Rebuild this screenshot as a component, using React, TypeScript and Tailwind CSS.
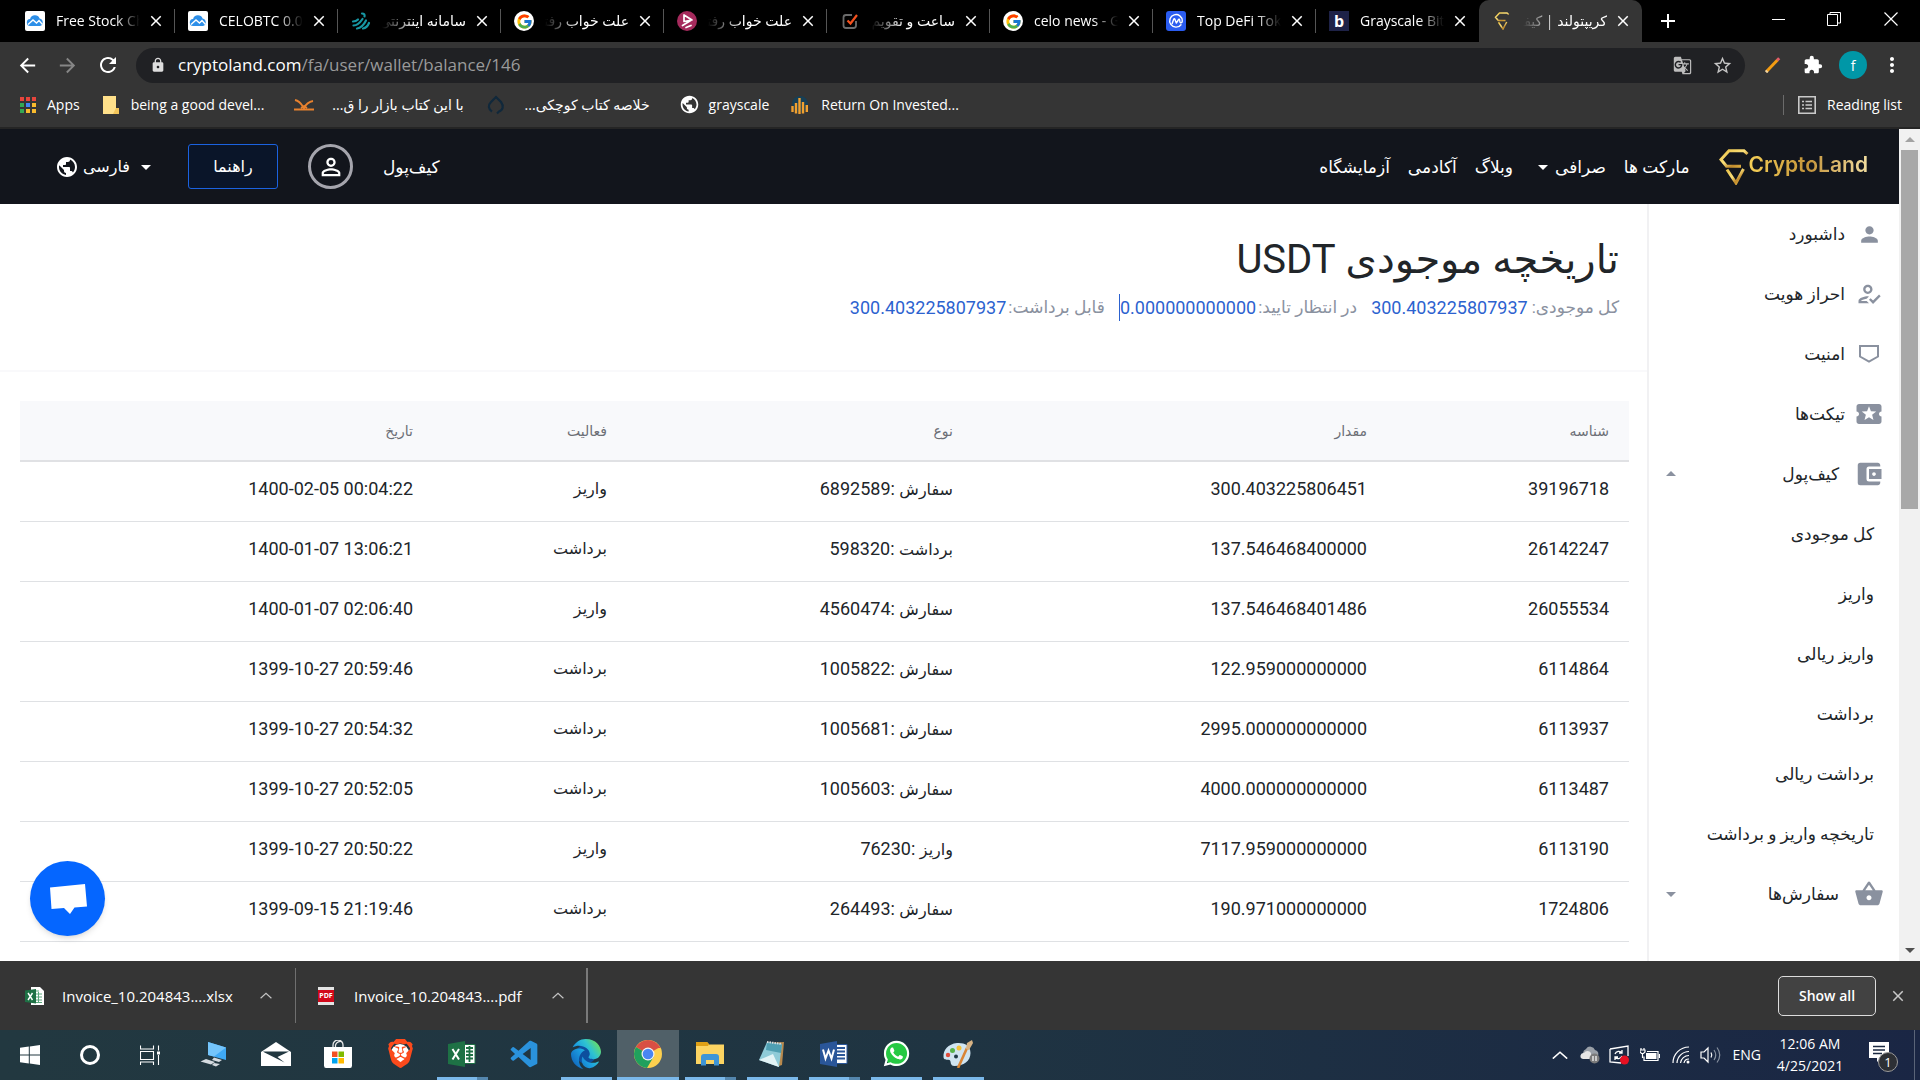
import React from "react";
import { FcGoogle } from "react-icons/fc";
import { FaWhatsapp, FaEdge } from "react-icons/fa6";
import { SiBrave } from "react-icons/si";
import { BiLogoVisualStudio } from "react-icons/bi";
import {
  MdPerson,
  MdPersonOutline,
  MdOutlineHowToReg,
  MdLocalActivity,
  MdAccountBalanceWallet,
  MdShoppingBasket,
  MdArrowDropDown,
  MdArrowDropUp,
  MdLock,
  MdExtension,
  MdStarBorder,
  MdGTranslate,
  MdMoreVert,
  MdPublic,
  MdArrowBack,
  MdArrowForward,
  MdRefresh,
  MdClose,
  MdAdd,
} from "react-icons/md";

/* ---------- Favicons ---------- */

const CloudIcon = () => (
  <svg viewBox="0 0 20 20" className="size-5">
    <rect width="20" height="20" rx="2" fill="#fff" />
    <path d="M5.500 15a3.500 3.500 0 0 1-.4-7A5 5 0 0 1 14.600 7.600 3.800 3.800 0 0 1 15 15z" fill="#2d8fe8" />
    <path d="M3 13.500 8 9l3.500 3L14 9.500l3.500 4" fill="none" stroke="#fff" strokeWidth="1.400" />
  </svg>
);

const TealLeafIcon = () => (
  <svg viewBox="0 0 20 20" className="size-5" fill="none" stroke="#1797a3" strokeWidth="2.200" strokeLinecap="round">
    <path d="M2 10.500c2 0 3.500-.5 5-2M2.500 14.500c4 0 6-2 9-6.500M6 17.500c4-.5 7-4 9-8M12 17.500c3-.5 5-3 6-5.500M11 2.500c2 0 3 1 2.500 3" />
  </svg>
);

const AparatIcon = () => (
  <svg viewBox="0 0 20 20" className="size-5">
    <circle cx="10" cy="10" r="10" fill="#a52a5c" />
    <path d="M7 4v6.500l8-1.500zM5.500 14.500 14.500 9M9 16.500l5-2" fill="none" stroke="#fff" strokeWidth="1.700" strokeLinejoin="round" strokeLinecap="round" />
  </svg>
);

const CheckSquareIcon = () => (
  <svg viewBox="0 0 20 20" className="size-5" fill="none">
    <path d="M12 4H6a2.500 2.500 0 0 0-2.500 2.500v8A2.500 2.500 0 0 0 6 17h7.500a2.500 2.500 0 0 0 2.500-2.500V10" stroke="#6b6b6b" strokeWidth="1.800" />
    <path d="m7.500 9.500 3 3L17 4" stroke="#f4511e" strokeWidth="2.200" />
  </svg>
);

const CoinMarketIcon = () => (
  <svg viewBox="0 0 20 20" className="size-5">
    <rect width="20" height="20" rx="3" fill="#2a5cf0" />
    <path
      d="M15 13.700A6.300 6.300 0 1 1 16.300 10c0 2.200-2.400 2.400-2.500.3 0-2.300-.8-3-1.800-.8L10.300 12 9 8.500C8.600 7.500 8 7.600 7.600 8.500L6.200 12.500"
      fill="none"
      stroke="#fff"
      strokeWidth="1.400"
      strokeLinecap="round"
      strokeLinejoin="round"
    />
  </svg>
);

const LetterBIcon = () => (
  <span className="flex size-5 items-center justify-center bg-[#1e2247] text-base leading-none font-bold text-white">b</span>
);

const CryptoLandMark = ({ className, id }: { className: string; id: string }) => (
  <svg viewBox="0 0 30 36" className={className} fill="none">
    <defs>
      <linearGradient id={id} x1="0" y1="0" x2="1" y2="1">
        <stop offset="0" stopColor="#e8c045" />
        <stop offset="0.45" stopColor="#fbe07a" />
        <stop offset="0.7" stopColor="#c08a2c" />
        <stop offset="1" stopColor="#e9bf4a" />
      </linearGradient>
    </defs>
    <path d="M28.500 5 25 1.800H10L2 10.500l5.500 6.700H22" stroke={`url(#${id})`} strokeWidth="3" />
    <path d="M8 20.500 17 34l7.500-14" stroke={`url(#${id})`} strokeWidth="3" />
  </svg>
);

/* ---------- Browser chrome ---------- */

type Tab = { title: string; icon: React.ReactNode; rtl?: boolean; active?: boolean };

const tabs: Tab[] = [
  { title: "Free Stock Charts", icon: <CloudIcon /> },
  { title: "CELOBTC 0.00011", icon: <CloudIcon /> },
  { title: "سامانه اینترنتی", icon: <TealLeafIcon />, rtl: true },
  { title: "علت خواب رفتن", icon: <span className="flex size-5 items-center justify-center rounded-full bg-white"><FcGoogle size={17} /></span>, rtl: true },
  { title: "علت خواب رفتن", icon: <AparatIcon />, rtl: true },
  { title: "ساعت و تقویم", icon: <CheckSquareIcon />, rtl: true },
  { title: "celo news - Google", icon: <span className="flex size-5 items-center justify-center rounded-full bg-white"><FcGoogle size={17} /></span> },
  { title: "Top DeFi Tokens", icon: <CoinMarketIcon /> },
  { title: "Grayscale Bitcoin", icon: <LetterBIcon /> },
  { title: "کریپتولند | کیف‌پول", icon: <CryptoLandMark className="h-[18px] w-5" id="tabmark" />, rtl: true, active: true },
];

function TabStrip() {
  return (
    <div className="flex h-[42px] shrink-0 items-stretch bg-black pl-3">
      {tabs.map((t, i) => (
        <div
          key={i}
          className={
            t.active
              ? "flex w-[163px] items-center rounded-t-[10px] bg-[#353535] pl-[13px]"
              : "flex w-[163px] items-center pl-[13px]"
          }
        >
          <span className="shrink-0">{t.icon}</span>
          <button
            dir={t.rtl ? "rtl" : "ltr"}
            className={
              t.rtl
                ? "ml-[11px] w-[84px] shrink-0 overflow-hidden text-start text-[14px] leading-6 whitespace-nowrap text-white [mask-image:linear-gradient(to_left,black_60%,transparent)]"
                : "ml-[11px] w-[84px] shrink-0 overflow-hidden text-start text-[14px] leading-6 whitespace-nowrap text-white [mask-image:linear-gradient(to_right,black_70%,transparent)]"
            }
          >
            {t.title}
          </button>
          <button aria-label="Close tab" className="ml-[7px] shrink-0 text-white">
            <MdClose size={18} />
          </button>
          {!t.active && i !== 8 && <span className="ml-auto h-6 w-px bg-[#555]" />}
        </div>
      ))}
      <button aria-label="New tab" className="ml-[14px] text-white">
        <MdAdd size={24} />
      </button>
      <div className="ml-auto flex items-center pb-1 text-white">
        <button aria-label="Minimize" className="flex w-14 justify-center">
          <span className="h-px w-[13px] bg-white" />
        </button>
        <button aria-label="Restore" className="flex w-14 justify-center">
          <svg viewBox="0 0 14 14" className="size-[14px]" fill="none" stroke="#fff">
            <path d="M.5 2.500h10v11H.5zM3 2.500v-2h10.500v10.500h-3" />
          </svg>
        </button>
        <button aria-label="Close" className="flex w-[58px] justify-center">
          <svg viewBox="0 0 14 14" className="size-[14px]" fill="none" stroke="#fff" strokeWidth="1.200">
            <path d="m.5.5 13 13M13.500.5l-13 13" />
          </svg>
        </button>
      </div>
    </div>
  );
}

function Toolbar() {
  return (
    <div className="flex h-[46px] shrink-0 items-center bg-[#353535] text-white">
      <button aria-label="Back" className="ml-4"><MdArrowBack size={23} /></button>
      <button aria-label="Forward" className="ml-[17px] text-[#868686]"><MdArrowForward size={23} /></button>
      <button aria-label="Reload" className="ml-[17px]"><MdRefresh size={24} /></button>
      <div className="ml-4 flex h-[35px] flex-1 items-center rounded-full bg-[#202124] pr-3 pl-[14px]">
        <MdLock size={16} className="text-[#dedede]" />
        <button className="ml-3 text-[17px] leading-6 text-[#9a9a9a]">
          <span className="text-white">cryptoland.com</span>/fa/user/wallet/balance/146
        </button>
        <button aria-label="Translate" className="ml-auto text-[#bdbdbd]"><MdGTranslate size={19} /></button>
        <button aria-label="Bookmark" className="ml-5 text-[#c6c6c6]"><MdStarBorder size={21} /></button>
      </div>
      <button aria-label="Editor" className="ml-5">
        <svg viewBox="0 0 16 16" className="size-4" fill="none" strokeWidth="3">
          <path d="M1.500 14.500 12.500 3" stroke="#f39c12" />
          <path d="M12.200 3.300 14.200 1.300" stroke="#e35d6a" />
          <path d="M1 15.200 2.400 13.700" stroke="#f5d6a0" />
        </svg>
      </button>
      <button aria-label="Extensions" className="ml-[22px]"><MdExtension size={20} /></button>
      <button aria-label="Profile" className="ml-[16px] flex size-7 items-center justify-center rounded-full bg-[#0097a7] text-[14px]">f</button>
      <button aria-label="Menu" className="mr-[16px] ml-[13px]"><MdMoreVert size={24} /></button>
    </div>
  );
}

const appColors = [
  "bg-[#e8453c]", "bg-[#e8453c]", "bg-[#e8453c]",
  "bg-[#34a853]", "bg-[#4285f4]", "bg-[#f9bb2d]",
  "bg-[#34a853]", "bg-[#f9bb2d]", "bg-[#f9bb2d]",
];

function Bookmarks() {
  return (
    <div className="flex h-[41px] shrink-0 items-center border-b-2 border-[#252525] bg-[#353535] pb-[6px] pl-5 text-[14px] leading-6 text-white">
      <a href="#apps" className="flex items-center gap-[11px]">
        <span className="grid grid-cols-3 gap-[2px]">
          {appColors.map((c, i) => <span key={i} className={`size-[4px] ${c}`} />)}
        </span>
        Apps
      </a>
      <a href="#folder" className="ml-[23px] flex items-center gap-3">
        <svg viewBox="0 0 16 18" className="h-[18px] w-4"><path d="M0 0h13v12h3v6H0z" fill="#ffe08a" /><path d="M13 12h3v6h-6z" fill="#f3c55a" /></svg>
        being a good devel...
      </a>
      <a href="#book1" className="ml-[30px] flex items-center gap-[18px]">
        <svg viewBox="0 0 20 12" className="h-3 w-5" fill="none" stroke="#e8812e" strokeWidth="1.800"><path d="M1 1c5 1 7 5 9 8 2-4 4-6 9-7M7 9l3-2 3 2M0 10.500h20" /></svg>
        <span dir="rtl">با این کتاب بازار را ق...</span>
      </a>
      <a href="#book2" className="ml-[23px] flex items-center gap-5">
        <svg viewBox="0 0 18 20" className="h-5 w-[18px]" fill="none" stroke="#10283b" strokeWidth="2.200"><path d="M5 16.500C1 14 1 10 4 7l5-5 5 5c3 4 2 8-2 9.500l-2 2" /></svg>
        <span dir="rtl">خلاصه کتاب کوچکی...</span>
      </a>
      <a href="#gray" className="ml-[29px] flex items-center gap-[9px]">
        <MdPublic size={21} />
        grayscale
      </a>
      <a href="#roi" className="ml-[22px] flex items-center gap-3">
        <svg viewBox="0 0 18 18" className="size-[18px]">
          <circle cx="9" cy="8" r="8" fill="#173f55" />
          <path d="M1.500 10v6M5 7v10.500M8.500 2v16M12 6v11.500M15.800 9v7" stroke="#f0a030" strokeWidth="2.400" />
        </svg>
        Return On Invested...
      </a>
      <div className="mr-[18px] ml-auto flex items-center">
        <span className="h-5 w-px bg-[#6b6b6b]" />
        <button className="ml-[14px] flex items-center gap-[11px]">
          <svg viewBox="0 0 18 18" className="size-[18px]" fill="none" stroke="#c9c9c9" strokeWidth="1.600">
            <path d="M.8.8h16.400v16.400H.8zM4 5.500h2M4 9h2M4 12.500h2M7.500 5.500h6.500M7.500 9h6.500M7.500 12.500h6.500" />
          </svg>
          Reading list
        </button>
      </div>
    </div>
  );
}

/* ---------- Site ---------- */

function SiteHeader() {
  return (
    <header className="flex h-[75px] shrink-0 items-center bg-[#12151c] pr-[31px] pl-[55px] text-[17px] leading-6 text-white">
      <a href="#home" dir="ltr" className="flex items-center">
        <CryptoLandMark className="h-9 w-[30px]" id="logomark" />
        <span className="bg-linear-to-r from-[#f5cf57] via-[#c4953a] to-[#f3dfa0] bg-clip-text pb-1 font-[Inter,sans-serif] text-[21px] leading-8 font-semibold text-transparent">
          CryptoLand
        </span>
      </a>
      <nav className="mr-[29px] flex items-center gap-[18px]">
        <a href="#markets">مارکت ها</a>
        <button className="flex items-center">
          صرافی
          <MdArrowDropDown size={24} />
        </button>
        <a href="#blog">وبلاگ</a>
        <a href="#academy">آکادمی</a>
        <a href="#lab">آزمایشگاه</a>
      </nav>
      <div className="mr-auto flex items-center">
        <a href="#wallet">کیف‌پول</a>
        <button aria-label="حساب کاربری" className="mr-[30px] flex size-[45px] items-center justify-center rounded-full border-[3px] border-[#a5a5ad]">
          <MdPersonOutline size={28} />
        </button>
        <button className="mr-[30px] flex h-[45px] w-[90px] items-center justify-center rounded-[3px] border border-[#1b62e0] bg-[#0a1529] text-[16px]">
          راهنما
        </button>
        <button className="mr-[30px] flex items-center gap-1 text-[16px]">
          <MdArrowDropDown size={24} />
          <span>فارسی</span>
          <MdPublic size={24} />
        </button>
      </div>
    </header>
  );
}

const ShieldIcon = () => (
  <svg viewBox="0 0 22 20" className="h-5 w-[22px]" fill="none" stroke="currentColor" strokeWidth="2">
    <path d="M2 2h18v10.500L11 17.500 2 12.500z" />
  </svg>
);

const mainItems = [
  { label: "داشبورد", icon: <MdPerson size={25} /> },
  { label: "احراز هویت", icon: <MdOutlineHowToReg size={28} /> },
  { label: "امنیت", icon: <ShieldIcon /> },
  { label: "تیکت‌ها", icon: <MdLocalActivity size={30} /> },
];
const walletItems = ["کل موجودی", "واریز", "واریز ریالی", "برداشت", "برداشت ریالی", "تاریخچه واریز و برداشت"];

function Sidebar() {
  return (
    <aside className="w-[252px] shrink-0 overflow-hidden border-l-2 border-[#f1f1f3] bg-white text-[17px] leading-6 text-[#212529]">
      <nav>
        {mainItems.map((m) => (
          <a key={m.label} href="#item" className="flex h-[60px] items-center gap-2 pr-[14px]">
            <span className="flex w-8 justify-center text-[#8a919f]">{m.icon}</span>
            <span>{m.label}</span>
          </a>
        ))}
        <button className="flex h-[60px] w-full items-center pr-[14px] pl-[10px]">
          <span className="flex w-8 justify-center text-[#8a919f]"><MdAccountBalanceWallet size={30} /></span>
          <span className="mr-[14px]">کیف‌پول</span>
          <MdArrowDropUp size={24} className="mr-auto text-[#8a919f]" />
        </button>
        {walletItems.map((w) => (
          <a key={w} href="#wallet-item" className="flex h-[60px] items-center pr-[25px]">{w}</a>
        ))}
        <button className="flex h-[60px] w-full items-center pr-[14px] pl-[10px]">
          <span className="flex w-8 justify-center text-[#8a919f]"><MdShoppingBasket size={30} /></span>
          <span className="mr-[14px]">سفارش‌ها</span>
          <MdArrowDropDown size={24} className="mr-auto text-[#8a919f]" />
        </button>
      </nav>
    </aside>
  );
}

const rows = [
  ["39196718", "300.403225806451", "سفارش", "6892589", "واریز", "1400-02-05 00:04:22"],
  ["26142247", "137.546468400000", "برداشت", "598320", "برداشت", "1400-01-07 13:06:21"],
  ["26055534", "137.546468401486", "سفارش", "4560474", "واریز", "1400-01-07 02:06:40"],
  ["6114864", "122.959000000000", "سفارش", "1005822", "برداشت", "1399-10-27 20:59:46"],
  ["6113937", "2995.000000000000", "سفارش", "1005681", "برداشت", "1399-10-27 20:54:32"],
  ["6113487", "4000.000000000000", "سفارش", "1005603", "برداشت", "1399-10-27 20:52:05"],
  ["6113190", "7117.959000000000", "واریز", "76230", "واریز", "1399-10-27 20:50:22"],
  ["1724806", "190.971000000000", "سفارش", "264493", "برداشت", "1399-09-15 21:19:46"],
];

function Content() {
  return (
    <main className="min-w-0 flex-1 overflow-hidden text-[#212529]">
      <section className="flex h-[168px] flex-col items-start border-b-2 border-[#f9f9fb] pt-7 pr-7">
        <h1 className="text-[40px] leading-[56px]">
          تاریخچه موجودی USDT
        </h1>
        <p className="mt-[6px] flex items-center text-[18px] leading-[27px] text-[#8a919f]">
          <span className="text-[17px]">کل موجودی:</span>
          <span className="mr-1 ml-[14px] text-[#2c62cf]">300.403225807937</span>
          <span className="text-[17px]">در انتظار تایید:</span>
          <span className="mr-[2px] ml-[14px] border-l border-[#2c62cf] text-[#2c62cf]">0.000000000000</span>
          <span className="text-[17px]">قابل برداشت:</span>
          <span className="mr-[2px] text-[#2c62cf]">300.403225807937</span>
        </p>
      </section>
      <div className="pt-[29px] pr-[18px] pl-5">
        <table className="w-full table-fixed border-collapse">
          <colgroup>
            <col className="w-[242px]" />
            <col className="w-[414px]" />
            <col className="w-[346px]" />
            <col className="w-[194px]" />
            <col className="w-[413px]" />
          </colgroup>
          <thead>
            <tr className="h-[60px] border-b-2 border-[#e0e1e4] bg-[#f8f9fb] text-[14px] leading-5 text-[#6c6f76]">
              {["شناسه", "مقدار", "نوع", "فعالیت", "تاریخ"].map((h) => (
                <th key={h} scope="col" className="px-5 text-start font-normal">{h}</th>
              ))}
            </tr>
          </thead>
          <tbody>
            {rows.map((r) => (
              <tr key={r[0]} className="h-[60px] border-b border-[#dfe1e4] text-[18px] leading-6">
                <td className="px-5 pb-1">{r[0]}</td>
                <td className="px-5 pb-1">{r[1]}</td>
                <td className="px-5 pb-1"><span className="text-[16px]">{r[2]}</span> :{r[3]}</td>
                <td className="px-5 pb-1 text-[16px]">{r[4]}</td>
                <td className="px-5 pb-1"><span dir="ltr">{r[5]}</span></td>
              </tr>
            ))}
          </tbody>
        </table>
      </div>
    </main>
  );
}

function Scrollbar() {
  return (
    <div className="flex w-[21px] shrink-0 flex-col items-center bg-[#f1f1f1]">
      <span className="flex h-[21px] items-center"><span className="border-x-[5px] border-b-[5px] border-x-transparent border-b-[#a3a3a3]" /></span>
      <span className="h-[359px] w-[17px] bg-[#a8a8a8]" />
      <span className="mt-auto flex h-[21px] items-center"><span className="border-x-[5px] border-t-[5px] border-x-transparent border-t-[#505050]" /></span>
    </div>
  );
}

/* ---------- Downloads ---------- */

const Chevron = ({ className }: { className: string }) => (
  <svg viewBox="0 0 20 10" className={className} fill="none" stroke="currentColor" strokeWidth="2"><path d="m1 9.500 9-8 9 8" /></svg>
);

function DownloadBar() {
  return (
    <div className="flex h-[69px] shrink-0 items-center bg-[#353535] text-[15px] leading-6 text-white">
      <button className="flex items-center pl-[25px]">
        <svg viewBox="0 0 19 18" className="h-[18px] w-[19px]">
          <path d="M6 0h9l4 4v14H6z" fill="#fff" />
          <path d="M10 4h4M10 7h7M10 10h7M10 13h7M10 15.500h7M13.500 5v11" stroke="#5aa87c" />
          <path d="M0 3.500 11 2v14.500L0 15z" fill="#1e7145" />
          <path d="m3 6 4.500 7M7.500 6 3 13" stroke="#fff" strokeWidth="1.400" />
        </svg>
        <span className="ml-[18px] w-[174px] text-start">Invoice_10.204843....xlsx</span>
      </button>
      <button aria-label="More options" className="ml-[24px] text-[#c4c4c4]"><Chevron className="h-[7px] w-3" /></button>
      <span className="ml-[23px] h-[55px] w-px bg-[#6f6f6f]" />
      <button className="flex items-center pl-[22px]">
        <span className="flex h-[18px] w-4 flex-col justify-center border-y-[3px] border-[#e4e4e4] bg-[#d2081a] text-center text-[7px] leading-3 font-bold">PDF</span>
        <span className="ml-[20px] w-[174px] text-start">Invoice_10.204843....pdf</span>
      </button>
      <button aria-label="More options" className="ml-[24px] text-[#c4c4c4]"><Chevron className="h-[7px] w-3" /></button>
      <span className="ml-[22px] h-[55px] w-[2px] bg-[#7a7a7a]" />
      <button className="ml-auto h-10 w-[98px] rounded-[5px] border border-[#dcdcdc] bg-[#424242] text-[14px] font-semibold">Show all</button>
      <button aria-label="Close downloads" className="mr-[13px] ml-[13px] text-[#c9c9c9]"><MdClose size={18} /></button>
    </div>
  );
}

/* ---------- Windows taskbar ---------- */

const WindowsLogo = () => (
  <svg viewBox="0 0 20 20" className="size-5" fill="#fff"><path d="M0 2.800 8.800 1.600v8H0zM9.800 1.500 20 0v9.600H9.800zM0 10.500h8.800v8L0 17.300zM9.800 10.500H20V20L9.800 18.600z" /></svg>
);
const TaskView = () => (
  <svg viewBox="0 0 20 20" className="size-5" fill="none" stroke="#fff" strokeWidth="1.100">
    <path d="M.5.500v3.500h13V.5M.5 6.500h13v8H.5zM.5 20v-3h13v3M18.500.5v5M18.500 10v10" /><path d="M17 6.500h3v3h-3z" fill="#fff" stroke="none" />
  </svg>
);
const PcIcon = () => (
  <svg viewBox="0 0 28 26" className="h-[26px] w-7">
    <path d="m8 1 18 5.500V19L8 14z" fill="#3fa9f5" /><path d="m8 1 18 5.500L14 15.500 8 14z" fill="#74c5fb" />
    <path d="M14 16.500 22 19l-3 2-7-2zM6 18l9 3-4 2.500-10.500-3zM14 22l6 1-4 2.500-4-1.500z" fill="#d5dbe0" />
  </svg>
);
const MailIcon = () => (
  <svg viewBox="0 0 30 24" className="h-6 w-[30px]"><path d="M0 10 15 0l15 10v14H0z" fill="#fff" /><path d="M2 9.500h26L16.500 15l7 5.500L3.500 10.500z" fill="#213740" /></svg>
);
const StoreIcon = () => (
  <svg viewBox="0 0 28 28" className="size-7">
    <path d="M9 8V5a5 5 0 0 1 10 0v3M11.500 8V5a5 5 0 0 1 7-3" fill="none" stroke="#e8e8e8" strokeWidth="1.300" /><path d="M0 7h28v18.500q0 2.500-2 2.500H2q-2 0-2-2.500z" fill="#fff" />
    <path d="M8 11.500h5.500V17H8z" fill="#f25022" /><path d="M14.500 11.500H20V17h-5.500z" fill="#7fba00" /><path d="M8 18h5.500v5.500H8z" fill="#00a4ef" /><path d="M14.500 18H20v5.500h-5.500z" fill="#ffb900" />
  </svg>
);
const BraveIcon = () => (
  <span className="grid place-items-center *:[grid-area:1/1]">
    <span className="h-[20px] w-[18px] rounded-full bg-white" />
    <SiBrave size={29} color="#fb4a1c" />
  </span>
);
const OfficeIcon = ({ dark, light, d, rows: lines }: { dark: string; light: string; d: string; rows: string }) => (
  <svg viewBox="0 0 28 26" className="h-[26px] w-7">
    <path d="M14 3.500h13v19H14z" fill="#fff" stroke={light} />
    <path d={lines} stroke={light} strokeWidth="1.800" />
    <path d="M0 3 17 0v26L0 23z" fill={dark} />
    <path d={d} stroke="#fff" strokeWidth="2" fill="none" />
  </svg>
);
const EdgeIcon = () => (
  <span className="grid place-items-center *:[grid-area:1/1]">
    <svg width="0" height="0">
      <defs>
        <linearGradient id="edge" x1="0" y1="0.9" x2="1" y2="0.2">
          <stop offset="0" stopColor="#0f5fb8" /><stop offset="0.45" stopColor="#1c9ee0" /><stop offset="0.7" stopColor="#2fc4d0" /><stop offset="1" stopColor="#6fe05a" />
        </linearGradient>
      </defs>
    </svg>
    <span className="size-5 rounded-full bg-[#0d4f9e]" />
    <FaEdge size={30} fill="url(#edge)" />
  </span>
);
const ChromeIcon = () => (
  <svg viewBox="0 0 28 28" className="size-7">
    <circle cx="14" cy="14" r="14" fill="#fdd04e" />
    <path d="M14 14 1.900 7A14 14 0 0 1 26.100 7z" fill="#d94f44" /><path d="M14 7.500h12.400" stroke="#d94f44" />
    <path d="M1.900 7A14 14 0 0 0 13 28l6.500-11L14 14z" fill="#20a05d" />
    <circle cx="14" cy="14" r="6.500" fill="#f4f4f4" /><circle cx="14" cy="14" r="5.300" fill="#4a86f3" />
  </svg>
);
const ExplorerIcon = () => (
  <svg viewBox="0 0 28 24" className="h-6 w-7">
    <path d="M0 0h11l2 2.500H28V22H0z" fill="#fcd462" /><path d="M0 0h11l2 2-1 2H0z" fill="#dfa016" />
    <path d="M5 23.500V15q0-3 3-3h12q3 0 3 3v8.500h-5V18h-8v5.500z" fill="#3f95d6" />
  </svg>
);
const NotepadIcon = () => (
  <svg viewBox="0 0 28 28" className="size-7">
    <path d="m10 3 16-1-2 23-3 1z" fill="#b98a4e" /><path d="M9 2 24 4l-3 23L1 20z" fill="#8fcbd8" /><path d="m9 2 15 2-1 9-15-3z" fill="#4f9fb2" /><path d="m1 20 14-6 6 13z" fill="#e2f3f6" /><path d="m9 2 15 2" stroke="#ddd" strokeWidth="2" strokeDasharray="1.500 1" />
  </svg>
);
const WhatsAppIcon = () => (
  <span className="grid place-items-center *:[grid-area:1/1]">
    <span className="size-[25px] rounded-full bg-[#26c943]" />
    <FaWhatsapp size={29} color="#fff" />
  </span>
);
const PaintIcon = () => (
  <svg viewBox="0 0 30 28" className="h-7 w-[30px]">
    <path d="M14 3C5 4 0 10 .5 17c.5 4 4 2 6 3s0 6 5 6c9 0 16-5 16-13S21 2.500 14 3z" fill="#cfe4f1" />
    <circle cx="9.500" cy="10.500" r="2.500" fill="#56b34b" /><circle cx="16" cy="8" r="2.500" fill="#f3c13a" /><circle cx="5" cy="15" r="2.200" fill="#e04b3a" /><circle cx="13" cy="16.500" r="2" fill="#1f3a48" />
    <path d="m15 28 9-20" stroke="#d98536" strokeWidth="2.600" /><path d="m23 9 1-6 5-3 1 3-4 7z" fill="#d8b384" />
  </svg>
);

type App = { name: string; icon: React.ReactNode; state?: "open" | "multi" | "active" };

const apps: App[] = [
  { name: "This PC", icon: <PcIcon /> },
  { name: "Mail", icon: <MailIcon /> },
  { name: "Store", icon: <StoreIcon /> },
  { name: "Brave", icon: <BraveIcon /> },
  { name: "Excel", icon: <OfficeIcon dark="#1e7145" light="#1e7145" d="m4.500 8 6.500 10.500M11 8 4.500 18.500" rows="M18 7h7M18 10.500h7M18 14h7M18 17.500h7M21.500 5v16" />, state: "multi" },
  { name: "VS Code", icon: <BiLogoVisualStudio size={32} color="#2a92dc" /> },
  { name: "Edge", icon: <EdgeIcon />, state: "open" },
  { name: "Chrome", icon: <ChromeIcon />, state: "active" },
  { name: "Explorer", icon: <ExplorerIcon />, state: "multi" },
  { name: "Notepad", icon: <NotepadIcon />, state: "open" },
  { name: "Word", icon: <OfficeIcon dark="#2a5699" light="#2a5699" d="m3 8.500 2.500 9 3-8 3 8 2.500-9" rows="M17 7h8M17 10.500h8M17 14h8M17 17.500h8" />, state: "multi" },
  { name: "WhatsApp", icon: <WhatsAppIcon />, state: "open" },
  { name: "Paint", icon: <PaintIcon />, state: "open" },
];

function Taskbar() {
  return (
    <div className="flex h-[50px] shrink-0 items-stretch bg-linear-to-r from-[#223840] via-[#1f3442] to-[#1a2644] text-white">
      <button aria-label="Start" className="flex w-[60px] items-center justify-center"><WindowsLogo /></button>
      <button aria-label="Search" className="flex w-[60px] items-center justify-center"><span className="size-[20px] rounded-full border-[3px] border-white" /></button>
      <button aria-label="Task view" className="mr-[3px] flex w-[60px] items-center justify-center"><TaskView /></button>
      {apps.map((a) => (
        <button
          key={a.name}
          aria-label={a.name}
          className={a.state === "active" ? "flex w-[62px] flex-col items-center bg-[#506068]" : "flex w-[62px] flex-col items-center"}
        >
          <span className="flex flex-1 items-center">{a.icon}</span>
          {a.state === "active" && <span className="h-[3px] w-full bg-[#7ab8ea]" />}
          {a.state === "open" && <span className="h-[3px] w-[51px] bg-[#7ab8ea]" />}
          {a.state === "multi" && (
            <span className="flex h-[3px] w-[51px] bg-[#5486ad]"><span className="w-10 bg-[#7ab8ea]" /></span>
          )}
          {!a.state && <span className="h-[3px]" />}
        </button>
      ))}
      <div className="ml-auto flex items-center text-[14px] leading-[22px]">
        <button aria-label="Hidden icons"><Chevron className="h-2 w-4" /></button>
        <svg viewBox="0 0 20 18" className="ml-3 h-[18px] w-5">
          <path d="M5 11a4.500 4.500 0 0 1 1-8 5 5 0 0 1 9 1 4 4 0 0 1 2 7z" fill="#9aa0a8" /><path d="M3 13a3 3 0 0 1 1-6 4 4 0 0 1 7 0v6z" fill="#e6e6e6" />
          <circle cx="14.500" cy="12.500" r="5" fill="#7b7b7b" /><path d="M13 10v5M16 10v5" stroke="#fff" strokeWidth="1.200" />
        </svg>
        <svg viewBox="0 0 21 20" className="ml-[9px] h-5 w-[21px]" fill="none" stroke="#fff" strokeWidth="1.300">
          <path d="M1 4 19 1v10M1 4v13l11 1M6 9a4 4 0 0 1 7-1M13 5v3h-3M13 11a4 4 0 0 1-7 1M6 15v-3h3" /><circle cx="15.500" cy="15" r="4.500" fill="#e81123" stroke="none" />
        </svg>
        <svg viewBox="0 0 20 16" className="ml-[10px] h-4 w-5" fill="none" stroke="#fff" strokeWidth="1.200">
          <path d="M7 4.500h11v9H4v-4M1 1v2M4 1v2M0 3h5v2L3.500 6.500h-2L0 5zM2.500 6.500V11M19.500 7v4" /><path d="M6 6h10.500v6H6z" fill="#fff" stroke="none" />
        </svg>
        <svg viewBox="0 0 18 18" className="ml-3 size-[18px]" fill="none" stroke="#fff" strokeWidth="1.200">
          <path d="M1 17A16 16 0 0 1 17 1M5 17A12 12 0 0 1 17 5.500M8.500 17A8.500 8.500 0 0 1 17 9.500M12 17a5 5 0 0 1 5-4" /><circle cx="16" cy="16" r="1.500" fill="#fff" stroke="none" />
        </svg>
        <svg viewBox="0 0 21 18" className="ml-[10px] h-[18px] w-[21px]" fill="none" stroke="#fff" strokeWidth="1.200">
          <path d="M1 6h3l4-4v14l-4-4H1zM11 6.500q1.500 2.500 0 5" /><path d="M14 4q3.500 5 0 10M17 1.500q5.500 7.500 0 15" stroke="#8892a0" />
        </svg>
        <button className="ml-3">ENG</button>
        <button className="ml-3 w-[74px] text-center">
          <span className="block">12:06 AM</span>
          <span className="block">4/25/2021</span>
        </button>
        <button aria-label="Notifications" className="relative ml-[18px] h-[34px] w-[34px]">
          <svg viewBox="0 0 20 20" className="absolute top-1 left-1 size-5"><path d="M0 0h20v16h-8l-4 4v-4H0z" fill="#fff" /><path d="M4 4.500h12M4 8h12M4 11.500h9" stroke="#1b2942" strokeWidth="1.300" /></svg>
          <span className="absolute top-[14px] left-[13px] flex size-5 items-center justify-center rounded-full border border-[#9a9a9a] bg-[#2d3035] text-[13px]">1</span>
        </button>
        <span className="mr-[5px] ml-[15px] h-[50px] w-px bg-[#5a6478]" />
      </div>
    </div>
  );
}

export default function App() {
  return (
    <div className="flex h-screen flex-col overflow-hidden bg-white font-['Open_Sans','DejaVu_Sans',sans-serif]">
      <TabStrip />
      <Toolbar />
      <Bookmarks />
      <div className="relative flex min-h-0 flex-1">
        <div dir="rtl" className="flex min-w-0 flex-1 flex-col font-[Roboto,'DejaVu_Sans',sans-serif]">
          <SiteHeader />
          <div className="flex min-h-0 flex-1">
            <Sidebar />
            <Content />
          </div>
        </div>
        <Scrollbar />
        <button aria-label="Chat" className="absolute bottom-[25px] left-[30px] flex size-[75px] items-center justify-center rounded-full bg-[#0566ff] shadow-md">
          <svg viewBox="0 0 38 32" className="h-8 w-[38px]" fill="#fff"><path d="M1 4.500 36 1l2 22.500-12.500 1L21 31l-6-6-12.500 1z" /></svg>
        </button>
      </div>
      <DownloadBar />
      <Taskbar />
    </div>
  );
}
